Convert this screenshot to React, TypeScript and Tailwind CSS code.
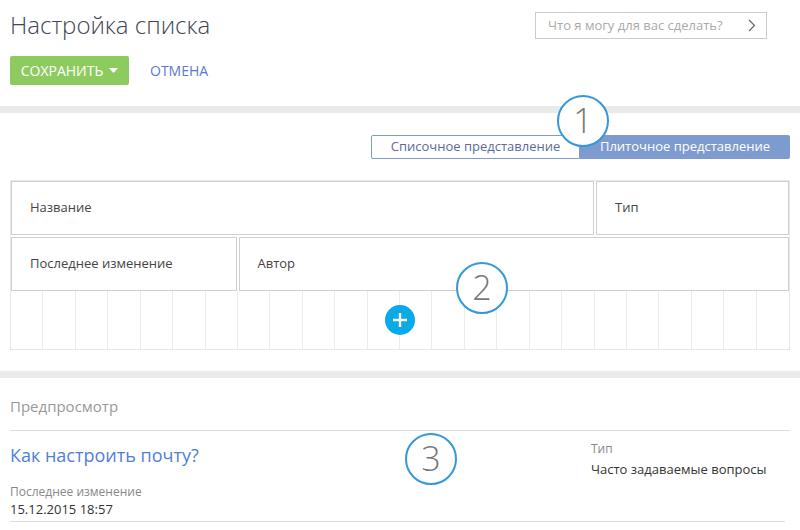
import React from 'react';

// ─── Callout circle (annotation over the screenshot) ─────────────────────────

function Callout({ n, className }: { n: number; className: string }) {
  return (
    <div
      className={`absolute flex h-[52px] w-[52px] items-center justify-center rounded-full border-2 border-[#3498db] bg-white text-[34px] font-light leading-none text-[#777] ${className}`}
    >
      <span className="-mt-[2px]">{n}</span>
    </div>
  );
}

function Band() {
  return <div className="h-[7px] bg-[#e9ebeb]" />;
}

function Cell({ label, span }: { label: string; span: string }) {
  return (
    <div className={`flex h-[54px] items-center border border-[#cfcfcf] pl-[18px] text-[13px] text-[#444] ${span}`}>
      {label}
    </div>
  );
}

export default function App() {
  const cols = Array.from({ length: 24 }, (_, i) => i);

  return (
    <div className="relative h-[530px] w-[800px] overflow-hidden bg-white font-['Open_Sans',sans-serif]">
      {/* ─── Header ─────────────────────────────────────────────────────── */}
      <div className="px-[10px]">
        <div className="flex items-start justify-between pr-[23px]">
          <h1 className="pt-[9px] text-[24px] font-light leading-[32px] text-[#3f4555]">Настройка списка</h1>
          <div className="mt-[12px] flex h-[27px] w-[232px] items-center justify-between border border-[#cccccc] pl-[12px] pr-[10px]">
            <span className="text-[13px] text-[#aaaaaa]">Что я могу для вас сделать?</span>
            <svg width="8" height="13" viewBox="0 0 8 13" fill="none">
              <path d="M1 1l5.5 5.5L1 12" stroke="#666" strokeWidth="1.2" />
            </svg>
          </div>
        </div>
        <div className="mt-[15px] mb-[21px] flex items-center">
          <button className="flex h-[29px] w-[119px] items-center justify-center gap-[6px] rounded-[2px] bg-[#8ecb5f] text-[14px] text-white">
            СОХРАНИТЬ
            <svg width="9" height="5" viewBox="0 0 9 5">
              <path d="M0 0h9L4.5 5z" fill="#fff" />
            </svg>
          </button>
          <button className="ml-[21px] text-[14px] text-[#5b78d2]">ОТМЕНА</button>
        </div>
      </div>

      <Band />

      {/* ─── Layout editor ──────────────────────────────────────────────── */}
      <div className="px-[10px] pt-[22px] pb-[21px]">
        <div className="flex justify-end">
          <div className="flex h-[24px] text-[13px]">
            <div className="flex w-[209px] items-center justify-center rounded-l-[2px] border border-[#7e9bd0] text-[#5d6a9a]">
              Списочное представление
            </div>
            <div className="flex w-[210px] items-center justify-center rounded-r-[2px] bg-[#7e9bd0] text-white">
              Плиточное представление
            </div>
          </div>
        </div>

        <div className="mt-[21px] border border-[#e8e8e8]">
          <div className="grid grid-cols-[repeat(24,minmax(0,1fr))] gap-[2px]">
            <Cell label="Название" span="col-span-18" />
            <Cell label="Тип" span="col-span-6" />
            <Cell label="Последнее изменение" span="col-span-7" />
            <Cell label="Автор" span="col-span-17" />
          </div>
          <div className="relative grid h-[58px] grid-cols-[repeat(24,minmax(0,1fr))]">
            {cols.map((i) => (
              <div key={i} className={i < 23 ? 'border-r border-[#ececec]' : ''} />
            ))}
            <div className="absolute left-1/2 top-1/2 flex h-[30px] w-[30px] -translate-x-1/2 -translate-y-1/2 items-center justify-center rounded-full bg-[#0aa9e8]">
              <svg width="14" height="14" viewBox="0 0 14 14">
                <path d="M7 0v14M0 7h14" stroke="#fff" strokeWidth="2.4" />
              </svg>
            </div>
          </div>
        </div>
      </div>

      <Band />

      {/* ─── Preview ────────────────────────────────────────────────────── */}
      <div className="pl-[10px]">
        <div className="mr-[10px] border-b border-[#dddddd] pt-[16px] pb-[12px]">
          <p className="text-[15px] leading-[24px] text-[#999]">Предпросмотр</p>
        </div>
        <div className="mr-[15px] flex border-b border-[#dddddd] pb-[3px]">
          <div className="flex-1">
            <p className="pt-[11px] text-[18px] leading-[26px] text-[#4f80d8]">Как настроить почту?</p>
            <p className="mt-[16px] text-[12px] leading-[16px] text-[#888]">Последнее изменение</p>
            <p className="text-[13px] leading-[18px] text-[#333]">15.12.2015 18:57</p>
          </div>
          <div className="w-[194px] pt-[10px]">
            <p className="text-[12px] leading-[16px] text-[#888]">Тип</p>
            <p className="mt-[3px] text-[13px] leading-[18px] text-[#333]">Часто задаваемые вопросы</p>
          </div>
        </div>
      </div>

      <Callout n={1} className="left-[557px] top-[95px]" />
      <Callout n={2} className="left-[456px] top-[262px]" />
      <Callout n={3} className="left-[405px] top-[433px]" />
    </div>
  );
}
